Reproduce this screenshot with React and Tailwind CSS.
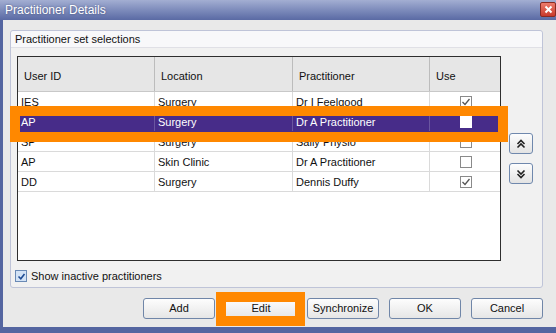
import React from 'react';

const ROWS = [
  { id: 'IES', loc: 'Surgery', who: 'Dr I Feelgood', use: true },
  { id: 'AP', loc: 'Surgery', who: 'Dr A Practitioner', use: false, selected: true },
  { id: 'SP', loc: 'Surgery', who: 'Sally Physio', use: false },
  { id: 'AP', loc: 'Skin Clinic', who: 'Dr A Practitioner', use: false },
  { id: 'DD', loc: 'Surgery', who: 'Dennis Duffy', use: true },
];

function Check({ checked, selected }) {
  return (
    <div className={`w-[12px] h-[12px] border flex items-center justify-center ${selected ? 'bg-white border-white' : 'bg-white border-[#8a8a8a]'}`}>
      {checked && (
        <svg width="10" height="10" viewBox="0 0 10 10">
          <path d="M1.5 5 L4 7.5 L8.5 2" fill="none" stroke="#555" strokeWidth="1.3" />
        </svg>
      )}
    </div>
  );
}

function Chevrons({ up }) {
  return (
    <svg width="12" height="12" viewBox="0 0 12 12">
      {up ? (
        <path d="M2.5 6 L6 2.5 L9.5 6 M2.5 9.5 L6 6 L9.5 9.5" fill="none" stroke="#222" strokeWidth="1.6" />
      ) : (
        <path d="M2.5 2.5 L6 6 L9.5 2.5 M2.5 6 L6 9.5 L9.5 6" fill="none" stroke="#222" strokeWidth="1.6" />
      )}
    </svg>
  );
}

function Btn({ children }) {
  return (
    <button className="w-[72px] h-[21px] rounded-[3px] border border-[#7086a8] bg-gradient-to-b from-[#fdfdfd] to-[#e6e6e6] text-[11px] text-[#111] flex items-center justify-center">
      {children}
    </button>
  );
}

export default function App() {
  return (
    <div className="w-[556px] h-[333px] bg-[#5465a0] relative overflow-hidden font-['Liberation_Sans',Arial,sans-serif] text-[11px] text-[#111]">
      {/* Title bar */}
      <div className="h-[20px] bg-gradient-to-b from-[#a3aed2] to-[#5a6aa4] flex items-center pl-[5px]">
        <span className="text-[12px] text-white [text-shadow:0_0_2px_rgba(40,50,90,0.6)]">Practitioner Details</span>
        <div className="ml-auto w-[16px] h-[15px] mb-[2px] rounded-[2px] border border-[#8a2a22] bg-gradient-to-b from-[#ec7b6c] to-[#c9382a] flex items-center justify-center">
          <svg width="9" height="9" viewBox="0 0 9 9">
            <path d="M1.5 1.5 L7.5 7.5 M7.5 1.5 L1.5 7.5" stroke="white" strokeWidth="2" />
          </svg>
        </div>
      </div>

      {/* Body */}
      <div className="ml-[3px] h-[307px] bg-[#e9e9e9] pt-[10px]">
        <div className="ml-[7px] w-[533px] h-[258px] border border-[#bfc4d8] rounded-[3px] bg-[#f1f1f1] flex flex-col">
          <div className="h-[17px] bg-[#f8f8fa] border-b border-[#e0e0e6] flex items-center pl-[4px] rounded-t-[3px]">
            Practitioner set selections
          </div>
          <div className="flex pl-[6px] pt-[8px]">
            {/* Table */}
            <div className="w-[484px] h-[205px] border border-[#2e2e2e] bg-white">
              <div className="grid grid-cols-[137px_138px_137px_70px] h-[35px] bg-[#e6e6e6] border-b border-[#c8c8c8]">
                {['User ID', 'Location', 'Practitioner', 'Use'].map((h, i) => (
                  <div key={h} className={`flex items-center pt-[5px] pl-[6px] ${i < 3 ? 'border-r border-[#bcbcbc]' : ''}`}>{h}</div>
                ))}
              </div>
              {ROWS.map((r, i) => (
                <div key={i} className={`grid grid-cols-[137px_138px_137px_70px] h-[20px] border-b ${r.selected ? 'bg-[#472c89] text-white border-[#472c89]' : 'border-[#dadada]'}`}>
                  <div className={`flex items-center pt-[2px] pl-[3px] border-r ${r.selected ? 'border-[#6a56a0]' : 'border-[#dadada]'}`}>{r.id}</div>
                  <div className={`flex items-center pt-[2px] pl-[3px] border-r ${r.selected ? 'border-[#6a56a0]' : 'border-[#dadada]'}`}>{r.loc}</div>
                  <div className={`flex items-center pt-[2px] pl-[3px] border-r ${r.selected ? 'border-[#6a56a0]' : 'border-[#dadada]'}`}>{r.who}</div>
                  <div className="flex items-center justify-center pl-[1px]">
                    <Check checked={r.use} selected={r.selected} />
                  </div>
                </div>
              ))}
            </div>
            {/* Move buttons */}
            <div className="flex flex-col gap-[9px] pl-[8px] pt-[77px]">
              <button className="w-[24px] h-[21px] rounded-[3px] border border-[#6f88ad] bg-gradient-to-b from-[#fdfdfd] to-[#e3e3e3] flex items-center justify-center">
                <Chevrons up />
              </button>
              <button className="w-[24px] h-[21px] rounded-[3px] border border-[#6f88ad] bg-gradient-to-b from-[#fdfdfd] to-[#e3e3e3] flex items-center justify-center">
                <Chevrons />
              </button>
            </div>
          </div>
          <div className="flex items-center gap-[4px] pl-[4px] mt-[7px]">
            <div className="w-[12px] h-[12px] border border-[#6a8ab5] bg-[#d3e3f6] flex items-center justify-center">
              <svg width="9" height="9" viewBox="0 0 9 9">
                <path d="M1.5 4.5 L3.8 6.8 L7.5 2" fill="none" stroke="#1e4c94" strokeWidth="1.6" />
              </svg>
            </div>
            <span className="text-[11px]">Show inactive practitioners</span>
          </div>
        </div>

        {/* Buttons */}
        <div className="flex justify-end gap-[10px] pr-[13px] mt-[10px]">
          <Btn>Add</Btn>
          <Btn>Edit</Btn>
          <Btn>Synchronize</Btn>
          <Btn>OK</Btn>
          <Btn>Cancel</Btn>
        </div>
      </div>

      {/* Orange highlight overlays */}
      <div className="absolute left-[10px] top-[106px] w-[498px] h-[36px] border-[10px] border-[#ff8800]" />
      <div className="absolute left-[216px] top-[292px] w-[89px] h-[34px] border-[10px] border-[#ff8800]" />
    </div>
  );
}
